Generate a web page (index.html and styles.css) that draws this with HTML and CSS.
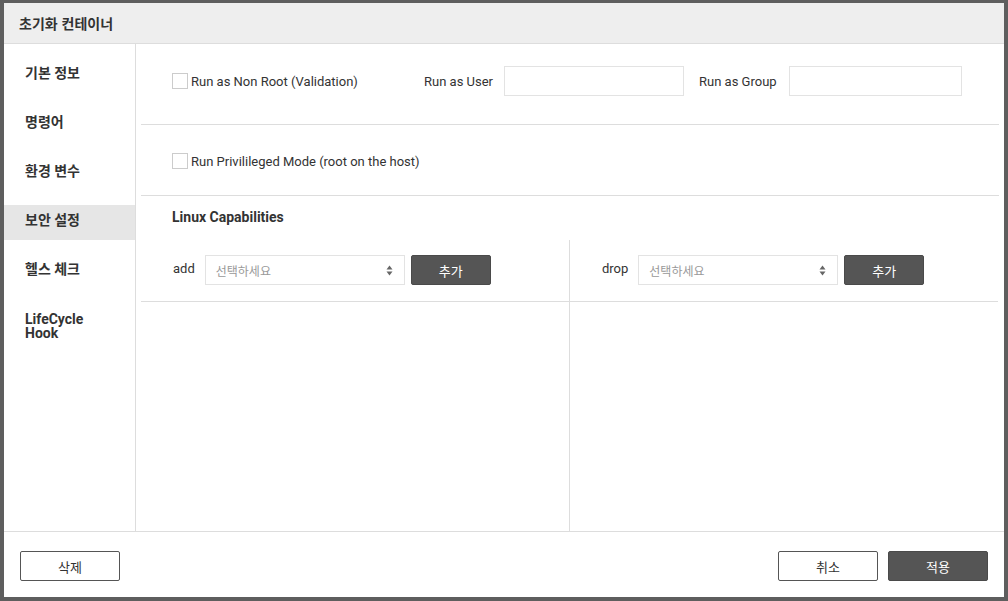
FILE: index.html
```html
<!DOCTYPE html>
<html lang="ko">
<head>
<meta charset="utf-8">
<title>초기화 컨테이너</title>
<link rel="stylesheet" href="styles.css">
</head>
<body>
<div class="modal">
  <div class="modal-header">초기화 컨테이너</div>
  <div class="modal-body">
    <ul class="side-nav">
      <li class="nav-item">기본 정보</li>
      <li class="nav-item">명령어</li>
      <li class="nav-item">환경 변수</li>
      <li class="nav-item active">보안 설정</li>
      <li class="nav-item">헬스 체크</li>
      <li class="nav-item nav-two">LifeCycle<br>Hook</li>
    </ul>
    <div class="content">
      <div class="section sec-user">
        <label class="check-group">
          <span class="checkbox"></span>
          <span class="check-label">Run as Non Root (Validation)</span>
        </label>
        <span class="field-label">Run as User</span>
        <input class="text-input user-input" type="text">
        <span class="field-label group-label">Run as Group</span>
        <input class="text-input group-input" type="text">
      </div>
      <div class="section sec-priv">
        <label class="check-group">
          <span class="checkbox"></span>
          <span class="check-label">Run Privilileged Mode (root on the host)</span>
        </label>
      </div>
      <div class="caps">
        <div class="caps-title">Linux Capabilities</div>
        <div class="caps-cols">
          <div class="caps-col">
            <div class="caps-row">
              <span class="caps-label">add</span>
              <div class="select">
                <span class="select-text">선택하세요</span>
                <svg class="select-arrows" width="7" height="11" viewBox="0 0 7 11"><path d="M3.5 0.5 L6.5 4.5 L0.5 4.5 Z" fill="#666"/><path d="M3.5 10.5 L6.5 6.5 L0.5 6.5 Z" fill="#666"/></svg>
              </div>
              <button class="btn-dark btn-add">추가</button>
            </div>
          </div>
          <div class="caps-col caps-col-right">
            <div class="caps-row">
              <span class="caps-label">drop</span>
              <div class="select">
                <span class="select-text">선택하세요</span>
                <svg class="select-arrows" width="7" height="11" viewBox="0 0 7 11"><path d="M3.5 0.5 L6.5 4.5 L0.5 4.5 Z" fill="#666"/><path d="M3.5 10.5 L6.5 6.5 L0.5 6.5 Z" fill="#666"/></svg>
              </div>
              <button class="btn-dark btn-add">추가</button>
            </div>
          </div>
        </div>
      </div>
    </div>
  </div>
  <div class="modal-footer">
    <button class="btn-light">삭제</button>
    <div class="footer-right">
      <button class="btn-light">취소</button>
      <button class="btn-dark btn-footer">적용</button>
    </div>
  </div>
</div>
</body>
</html>
```

FILE: styles.css
```css
* { box-sizing: border-box; }
html, body { margin: 0; padding: 0; }
body {
  background: #5e5e5e;
  font-family: Roboto, "Noto Sans CJK KR", sans-serif;
  color: #333;
  width: 1008px;
  height: 601px;
  overflow: hidden;
}
.modal {
  margin: 3px 0 0 4px;
  width: 1000px;
  height: 594px;
  background: #fff;
  display: flex;
  flex-direction: column;
}
.modal-header {
  height: 41px;
  background: #eee;
  border-bottom: 1px solid #ddd;
  padding-left: 15px;
  font-size: 14px;
  font-weight: 700;
  line-height: 40px;
  color: #333;
  font-family: "Noto Sans CJK KR", sans-serif;
}
.modal-body {
  height: 488px;
  display: flex;
  border-bottom: 1px solid #ddd;
}
.side-nav {
  list-style: none;
  margin: 0;
  padding: 14px 0 0 0;
  width: 132px;
  border-right: 1px solid #ddd;
}
.nav-item {
  padding: 8px 0 12px 21px;
  margin-bottom: 14px;
  font-size: 14px;
  line-height: 15px;
  font-weight: 700;
  color: #333;
  font-family: Roboto, "Noto Sans CJK KR", sans-serif;
}
.nav-item.nav-two { line-height: 14px; padding-top: 9px; }
.nav-item.active { background: #e6e6e6; }
.content {
  flex: 1;
  padding: 0 5px;
  display: flex;
  flex-direction: column;
}
.section {
  display: flex;
  align-items: center;
  border-bottom: 1px solid #ddd;
  padding-left: 31px;
}
.sec-user { height: 81px; padding-top: 22px; padding-bottom: 28px; }
.sec-priv { height: 71px; padding-top: 28px; padding-bottom: 26px; }
.check-group {
  display: flex;
  align-items: center;
  width: 252px;
  font-size: 13px;
}
.checkbox {
  width: 16px;
  height: 16px;
  border: 1px solid #ccc;
  background: #fff;
  margin-right: 3px;
  flex: none;
}
.check-label { white-space: nowrap; }
.field-label { font-size: 13px; white-space: nowrap; }
.text-input {
  height: 30px;
  border: 1px solid #e3e3e3;
  margin: 0 0 0 11px;
  padding: 0;
  outline: none;
  background: #fff;
}
.user-input { width: 180px; }
.group-label { margin-left: 15px; }
.group-input { width: 173px; margin-left: 12px; }
.caps { flex: 1; display: flex; flex-direction: column; }
.caps-title {
  height: 44px;
  padding: 13px 0 0 31px;
  font-size: 14px;
  font-weight: 700;
  line-height: 16px;
}
.caps-cols { flex: 1; display: flex; }
.caps-col { width: 428px; }
.caps-col-right { width: 429px; border-left: 1px solid #ddd; }
.caps-row {
  display: flex;
  align-items: center;
  height: 62px;
  padding: 15px 0 16px 32px;
  border-bottom: 1px solid #ddd;
}
.caps-col-right .caps-row { padding-left: 32px; }
.caps-label { font-size: 13px; margin-right: 10px; margin-top: -4px; }
.caps-col-right .caps-label { margin-right: 10px; }
.select {
  width: 200px;
  height: 30px;
  border: 1px solid #e3e3e3;
  display: flex;
  align-items: center;
  justify-content: space-between;
  padding: 0 11px 0 10px;
}
.select-text { font-size: 12px; color: #999; }
.btn-dark {
  background: #555;
  color: #fff;
  border: 1px solid #4a4a4a;
  border-radius: 2px;
  font-family: Roboto, "Noto Sans CJK KR", sans-serif;
  font-size: 13px;
  height: 30px;
  padding: 0;
}
.btn-add { width: 80px; margin-left: 6px; }
.modal-footer {
  flex: 1;
  display: flex;
  justify-content: space-between;
  padding: 19px 16px 0 16px;
}
.footer-right { display: flex; gap: 10px; }
.btn-light {
  width: 100px;
  height: 30px;
  background: #fff;
  color: #333;
  border: 1px solid #555;
  border-radius: 2px;
  font-family: Roboto, "Noto Sans CJK KR", sans-serif;
  font-size: 13px;
  padding: 0;
}
.btn-footer { width: 100px; }
```
